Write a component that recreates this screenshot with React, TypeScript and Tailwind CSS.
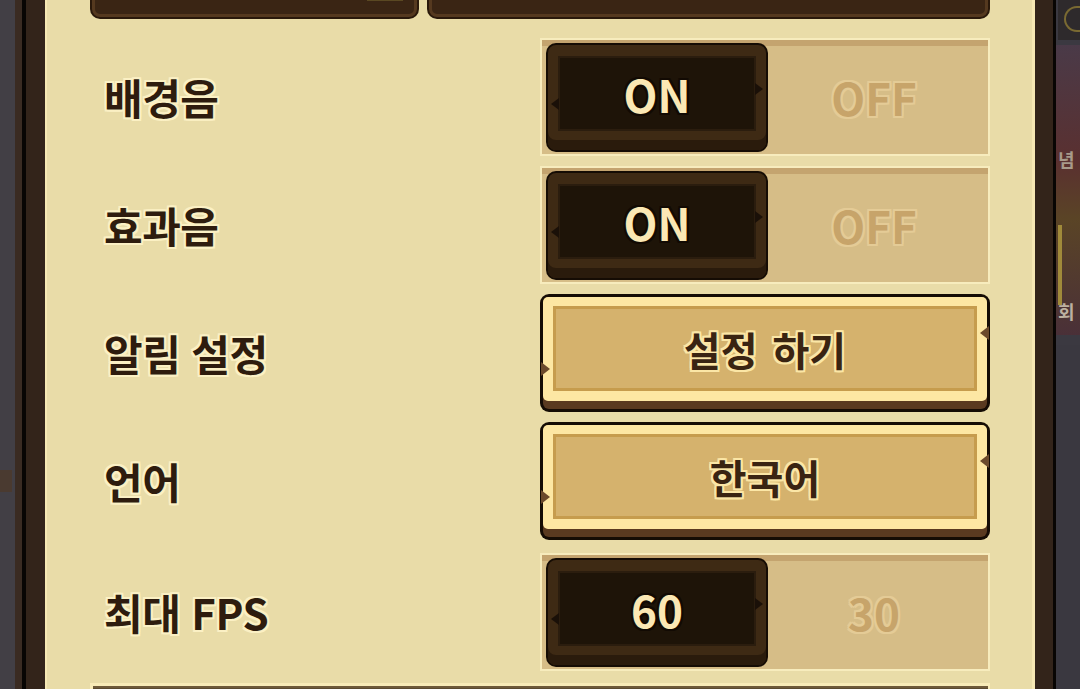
import React from "react";

const FONT = "font-['Noto_Sans_CJK_KR','Noto_Sans',sans-serif] font-bold";

const labelShadow =
  "[text-shadow:2px_0_0_#fbf0c4,-2px_0_0_#fbf0c4,0_2px_0_#fbf0c4,0_-2px_0_#fbf0c4,2px_2px_0_#fbf0c4,-2px_-2px_0_#fbf0c4,2px_-2px_0_#fbf0c4,-2px_2px_0_#fbf0c4]";
const onShadow =
  "[text-shadow:2px_0_0_#120a03,-2px_0_0_#120a03,0_2px_0_#120a03,0_-2px_0_#120a03,2px_2px_0_#120a03,-2px_-2px_0_#120a03,2px_-2px_0_#120a03,-2px_2px_0_#120a03]";
const offShadow =
  "[text-shadow:2px_0_0_#e4cb96,-2px_0_0_#e4cb96,0_2px_0_#e4cb96,0_-2px_0_#e4cb96,2px_2px_0_#e4cb96,-2px_-2px_0_#e4cb96,2px_-2px_0_#e4cb96,-2px_2px_0_#e4cb96]";
const btnShadow =
  "[text-shadow:2px_0_0_#fbe6a6,-2px_0_0_#fbe6a6,0_2px_0_#fbe6a6,0_-2px_0_#fbe6a6,2px_2px_0_#fbe6a6,-2px_-2px_0_#fbe6a6,2px_-2px_0_#fbe6a6,-2px_2px_0_#fbe6a6]";

function Label({ children }: { children: React.ReactNode }) {
  return (
    <div className={`flex-1 pl-[14px] text-[42px] leading-none tracking-[-0.5px] [word-spacing:2px] text-[#2e1c0e] ${FONT} ${labelShadow}`}>
      {children}
    </div>
  );
}

function Toggle({ on, off }: { on: string; off: string }) {
  return (
    <div className="w-[450px] h-[118px] bg-[#f7ecbd] p-[2px]">
      <div className="h-full flex bg-[linear-gradient(#c4a46f_0_6px,#d6bd87_6px)] pt-[3px] pb-[2px] pl-[4px]">
        <div className="relative w-[222px] h-full rounded-[10px] bg-[#150c04] p-[2px]">
          <div className="h-full rounded-[8px] bg-[#3e2a14] shadow-[inset_0_-10px_0_#2a1b0c] pt-[11px] px-[10px] pb-[19px]">
            <div className="relative h-full bg-[#1e1408] border-2 border-[#2b1d0e] flex items-center justify-center">
              <span className={`text-[44px] leading-none text-[#fbe8b4] ${FONT} ${onShadow}`}>{on}</span>
              <svg className="absolute left-[-9px] top-[40px]" width="8" height="12" viewBox="0 0 8 12">
                <polygon points="0,6 8,0 8,12" fill="#1a1008" />
              </svg>
              <svg className="absolute right-[-9px] top-[25px]" width="8" height="12" viewBox="0 0 8 12">
                <polygon points="8,6 0,0 0,12" fill="#1a1008" />
              </svg>
            </div>
          </div>
        </div>
        <div className="flex-1 flex items-center justify-center pb-[2px] pr-[8px]">
          <span className={`text-[44px] leading-none text-[#c7a46a] ${FONT} ${offShadow}`}>{off}</span>
        </div>
      </div>
    </div>
  );
}

function BeigeButton({ text }: { text: string }) {
  return (
    <div className="relative w-[450px] h-[118px] rounded-[9px] bg-[#150c04] p-[3px]">
      <div className="h-full rounded-[6px] bg-[#5a3a20] pb-[8px]">
        <div className="h-full rounded-[5px] bg-[#fde7a3] pt-[9px] pb-[10px] px-[10px]">
          <div className="h-full bg-[#d5b26d] border-[3px] border-[#c69c4d] flex items-center justify-center">
            <span className={`text-[40px] leading-none [word-spacing:6px] text-[#3a2412] ${FONT} ${btnShadow}`}>{text}</span>
          </div>
        </div>
      </div>
      <svg className="absolute left-[1px] top-[68px]" width="9" height="14" viewBox="0 0 9 14">
        <polygon points="9,7 0,0 0,14" fill="#6b4a2c" />
      </svg>
      <svg className="absolute right-[1px] top-[32px]" width="9" height="14" viewBox="0 0 9 14">
        <polygon points="0,7 9,0 9,14" fill="#6b4a2c" />
      </svg>
    </div>
  );
}

function Row({ label, children, className = "" }: { label: string; children: React.ReactNode; className?: string }) {
  return (
    <div className={`flex items-center h-[118px] ${className}`}>
      <Label>{label}</Label>
      {children}
    </div>
  );
}

export default function App() {
  return (
    <div className="w-[1080px] h-[689px] overflow-hidden flex bg-[#3d3a40]">
      {/* left background strip */}
      <div className="w-[15px] h-full bg-[#423f45] relative">
        <div className="absolute left-0 top-[470px] w-[12px] h-[22px] bg-[#4a3a30]" />
      </div>
      {/* frame */}
      <div className="w-[1041px] h-full bg-[#3a2b22] pl-[7px]">
        <div className="h-full bg-[#080503] pl-[4px] pr-[3px]">
          <div className="h-full bg-[#33241a] pl-[19px] pr-[18px]">
            <div className="h-full bg-[#f6e8b4] pl-[2px] pr-[3px]">
              <div className="h-full bg-[#e9dca8] pl-[43px] pr-[42px] flex flex-col">
                {/* top buttons (cut off) */}
                <div className="flex gap-[8px] h-[80px] mt-[-61px] shrink-0">
                  <div className="relative w-[329px] h-full rounded-[10px] bg-[#2a190b] p-[2px]">
                    <div className="h-full rounded-[8px] border-[3px] border-[#55391f] bg-[#3a2514]" />
                    <div className="absolute left-[277px] top-[58px] w-[36px] h-[4px] bg-[#5a4822]" />
                  </div>
                  <div className="relative flex-1 h-full rounded-[10px] bg-[#2a190b] p-[2px]">
                    <div className="h-full rounded-[8px] border-[3px] border-[#55391f] bg-[#3a2514]" />
                  </div>
                </div>
                <Row label="배경음" className="mt-[19px]">
                  <Toggle on="ON" off="OFF" />
                </Row>
                <Row label="효과음" className="mt-[10px]">
                  <Toggle on="ON" off="OFF" />
                </Row>
                <Row label="알림 설정" className="mt-[10px]">
                  <BeigeButton text="설정 하기" />
                </Row>
                <Row label="언어" className="mt-[10px]">
                  <BeigeButton text="한국어" />
                </Row>
                <Row label="최대 FPS" className="mt-[13px]">
                  <Toggle on="60" off="30" />
                </Row>
                {/* next element (cut off) */}
                <div className="mt-[12px] h-[40px] shrink-0 bg-[#f8ebb8] pt-[3px] pl-[3px] pr-[2px]">
                  <div className="h-full bg-[#5b4a30] border-t-[2px] border-[#6e5a3a]" />
                </div>
              </div>
            </div>
          </div>
        </div>
      </div>
      {/* right background game art */}
      <div className="relative w-[24px] h-full bg-[#3b3941] overflow-hidden">
        <div className="absolute left-[2px] top-[0px] w-[22px] h-[40px] bg-[#2e2a2c]" />
        <div className="absolute left-[8px] top-[6px] w-[16px] h-[26px] rounded-l-full border-2 border-r-0 border-[#7a6a32]" />
        <div className="absolute left-[0px] top-[45px] w-[24px] h-[290px] bg-[linear-gradient(#4a3a48,#5a3030_40%,#5a4426_60%,#4a3038)]" />
        <div className="absolute left-[2px] top-[225px] w-[4px] h-[80px] bg-[#a08a3a]" />
        <div className={`absolute left-[2px] top-[302px] text-[18px] leading-none text-[#bcb0a0] ${FONT}`}>회</div>
        <div className={`absolute left-[2px] top-[150px] text-[18px] leading-none text-[#a89a8a] ${FONT}`}>념</div>
        <div className="absolute left-[0px] top-[345px] w-[24px] h-[344px] bg-[#3a3840]" />
      </div>
    </div>
  );
}
